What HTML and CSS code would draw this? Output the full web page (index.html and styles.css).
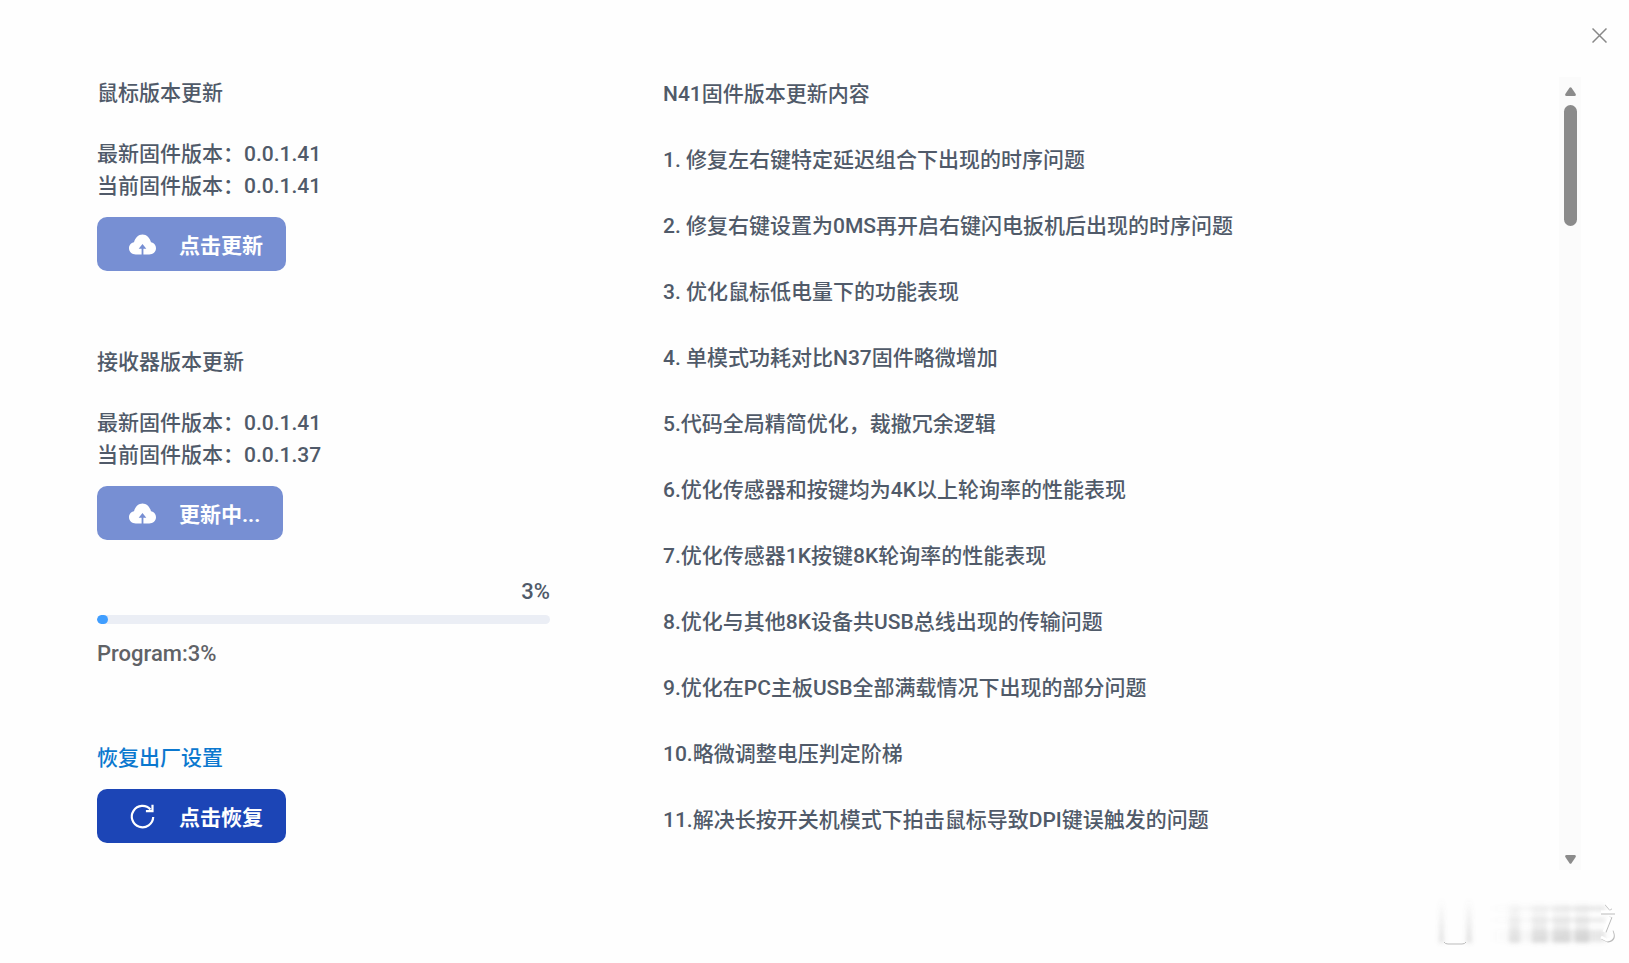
FILE: index.html
```
<!DOCTYPE html>
<html lang="zh-CN">
<head>
    <meta charset="UTF-8">
    <meta name="viewport" content="width=device-width, initial-scale=1.0">
    <title>固件更新</title>
    <link rel="stylesheet" href="styles.css">
</head>
<body>
    <div class="header">
        <button class="close" aria-label="关闭">
            <svg width="15" height="15" viewBox="0 0 15 15"><path d="M.5.5l14 14M14.5.5l-14 14"/></svg>
        </button>
    </div>

    <div class="container">
        <div class="sidebar">
            <section class="block">
                <h2>鼠标版本更新</h2>
                <p>最新固件版本：0.0.1.41</p>
                <p>当前固件版本：0.0.1.41</p>
                <button class="btn" disabled>
                    <svg class="icon" viewBox="0 0 27 27"><path fill="#fff" fill-rule="evenodd" d="M6.8 23.500C3 23.500 0 20.700 0 17.300c0-3 2.100-5.500 5-6C6 7 9.400 3.500 13.500 3.500s7.500 3.500 8.500 7.800c2.900.5 5 3 5 6 0 3.400-3 6.200-6.800 6.200h-5.800v-5.800h2.900L13.500 13l-3.800 4.700h2.900v5.800z"/></svg>
                    点击更新
                </button>
            </section>

            <section class="block">
                <h2>接收器版本更新</h2>
                <p>最新固件版本：0.0.1.41</p>
                <p>当前固件版本：0.0.1.37</p>
                <button class="btn" disabled>
                    <svg class="icon" viewBox="0 0 27 27"><path fill="#fff" fill-rule="evenodd" d="M6.8 23.500C3 23.500 0 20.700 0 17.300c0-3 2.100-5.500 5-6C6 7 9.400 3.500 13.500 3.500s7.500 3.500 8.500 7.800c2.900.5 5 3 5 6 0 3.400-3 6.200-6.800 6.200h-5.800v-5.800h2.900L13.500 13l-3.800 4.700h2.900v5.800z"/></svg>
                    更新中...
                </button>
            </section>

            <section class="progress">
                <p class="percent">3%</p>
                <div class="progress-bar">
                    <div style="width: 2.4%"></div>
                </div>
                <p class="status">Program:3%</p>
            </section>

            <section class="reset">
                <h2>恢复出厂设置</h2>
                <button class="btn">
                    <svg class="icon" viewBox="0 0 27 27"><path fill="none" stroke="#fff" stroke-width="2.200" d="M24.200 14A10.700 10.700 0 1 1 21.500 6.500M23.500 1.800v6.400h-6.600"/></svg>
                    点击恢复
                </button>
            </section>
        </div>

        <div class="notes">
            <h2>N41固件版本更新内容</h2>
            <p>1. 修复左右键特定延迟组合下出现的时序问题</p>
            <p>2. 修复右键设置为0MS再开启右键闪电扳机后出现的时序问题</p>
            <p>3. 优化鼠标低电量下的功能表现</p>
            <p>4. 单模式功耗对比N37固件略微增加</p>
            <p>5.代码全局精简优化，裁撤冗余逻辑</p>
            <p>6.优化传感器和按键均为4K以上轮询率的性能表现</p>
            <p>7.优化传感器1K按键8K轮询率的性能表现</p>
            <p>8.优化与其他8K设备共USB总线出现的传输问题</p>
            <p>9.优化在PC主板USB全部满载情况下出现的部分问题</p>
            <p>10.略微调整电压判定阶梯</p>
            <p>11.解决长按开关机模式下拍击鼠标导致DPI键误触发的问题</p>
        </div>

        <div class="scrollbar">
            <svg width="11" height="9" viewBox="0 0 11 9"><path d="M4.500.8Q5.500-.4 6.500.8L10.700 7Q11.300 9 9.500 9h-8Q-.3 9 .3 7z"/></svg>
            <div class="track">
                <div class="thumb"></div>
            </div>
            <svg width="11" height="9" viewBox="0 0 11 9"><path d="M4.500 8.200Q5.500 9.400 6.500 8.200L10.700 2Q11.300 0 9.500 0h-8Q-.3 0 .3 2z"/></svg>
        </div>
    </div>

    <!-- faded mark in the corner -->
    <svg class="mark" width="190" height="60" viewBox="0 0 190 60" aria-hidden="true">
        <defs>
            <linearGradient id="fade" x1="0" y1="0" x2="0" y2="1">
                <stop offset="0" stop-color="#777" stop-opacity="0"/>
                <stop offset="1" stop-color="#777" stop-opacity=".2"/>
            </linearGradient>
            <linearGradient id="side" x1="0" y1="0" x2="1" y2="0">
                <stop offset="0" stop-color="#777" stop-opacity="0"/>
                <stop offset="1" stop-color="#777" stop-opacity=".18"/>
            </linearGradient>
            <filter id="soft"><feGaussianBlur stdDeviation="2"/></filter>
        </defs>
        <g filter="url(#soft)">
            <path fill="url(#fade)" d="M10 4h5v44h-5zM37 4h6v44h-6zM80 8h11v40H80zM103 8h15v40h-15zM124 8h17v40h-17zM146 8h14v40h-14z"/>
            <path fill="url(#side)" d="M60 11h116v5H60zM60 23h116v4H60zM60 35h116v12H60z"/>
        </g>
        <path fill="none" stroke="#bbb" stroke-width="1" d="M15 47q1 2 4 2h14q3 0 4-2"/>
        <path class="stroke-shadow" d="M177 9l5 6M172 18h14M182 22l-6 15M183 36q4 9-4 10l-6-3"/>
        <path class="stroke-light" d="M177 8l5 6M172 17h14M181 22l-6 15M182 36q4 8-4 9l-6-3"/>
    </svg>
</body>
</html>
```

FILE: styles.css
```
body {
    font-family: Roboto, "Noto Sans CJK SC", sans-serif;
    font-size: 21px;
    font-weight: 500;
    line-height: 32px;
    margin: 0;
    background: #fefefe;
    color: #505a69;
}

h2,
p {
    font-size: 21px;
    font-weight: 500;
    margin: 0;
}

.header {
    display: flex;
    justify-content: flex-end;
    padding: 23px 18px 0;
    height: 54px;
}

.close {
    display: flex;
    align-items: center;
    justify-content: center;
    width: 24px;
    height: 24px;
    padding: 0;
    border: none;
    background: none;
    cursor: pointer;
}

.close svg {
    fill: none;
    stroke: #888;
    stroke-width: 1.5;
}

.container {
    display: flex;
    padding: 0 48px 0 97px;
}

.sidebar {
    flex: 0 0 453px;
}

.block {
    margin-bottom: 75px;
}

.block h2 {
    margin-bottom: 29px;
}

.btn {
    display: flex;
    align-items: center;
    gap: 23px;
    height: 54px;
    margin-top: 15px;
    padding: 0 23px 0 32px;
    border: none;
    border-radius: 10px;
    background: #1c45b6;
    color: #fff;
    font-family: inherit;
    font-size: 21px;
    font-weight: 700;
    cursor: pointer;
}

.btn:disabled {
    background: #778fd3;
    cursor: default;
}

.icon {
    width: 27px;
    height: 27px;
}

.progress {
    margin-top: -39px;
    margin-bottom: 72px;
}

.percent,
.status {
    font-size: 22px;
}

.percent {
    text-align: right;
    margin-bottom: 7px;
}

.progress-bar {
    height: 9px;
    margin-bottom: 14px;
    border-radius: 5px;
    background: #ebeef5;
    overflow: hidden;
}

.progress-bar div {
    height: 100%;
    border-radius: 5px;
    background: #409eff;
}

.status {
    color: #606266;
}

.reset h2 {
    color: #0b78cf;
}

.notes {
    flex: 1;
    margin-left: 113px;
    padding-top: 1px;
}

.notes h2,
.notes p {
    margin-bottom: 34px;
}

.scrollbar {
    display: flex;
    flex-direction: column;
    align-items: center;
    gap: 9px;
    width: 22px;
    padding: 10px 0 6px;
    background: #fbfbfb;
    fill: #8b8b8b;
}

.track {
    flex: 1;
}

.thumb {
    width: 13px;
    height: 121px;
    border-radius: 7px;
    background: #8b8b8b;
}

.mark {
    position: absolute;
    right: 10px;
    bottom: 8px;
}

.stroke-shadow,
.stroke-light {
    fill: none;
    stroke: #bbb;
    stroke-width: 3;
}

.stroke-light {
    stroke: #fff;
}
```
